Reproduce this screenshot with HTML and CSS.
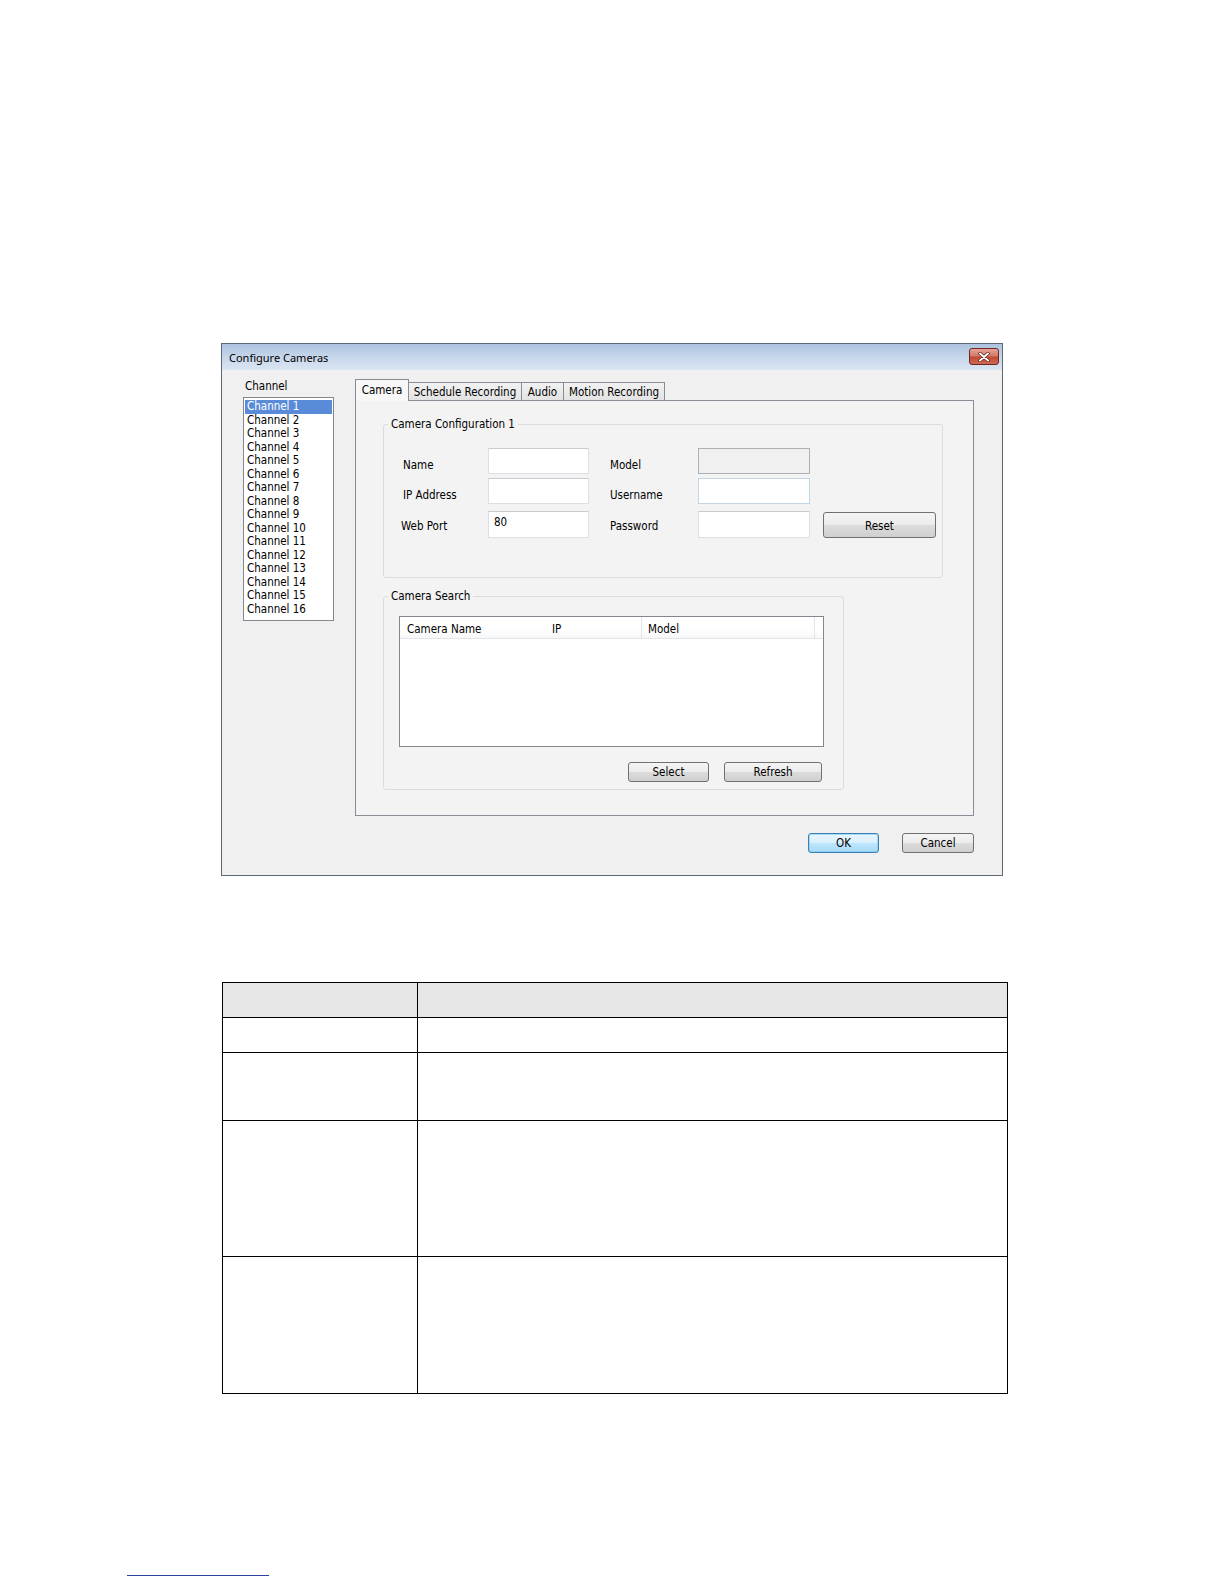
FILE: index.html
```html
<!DOCTYPE html>
<html>
<head>
<meta charset="utf-8">
<title>Configure Cameras</title>
<link rel="stylesheet" href="styles.css">
</head>
<body>
<div class="dialog">
  <div class="titlebar">
    <span class="title">Configure Cameras</span>
    <span class="close"><svg width="12" height="10" viewBox="0 0 12 10"><path d="M2 1.5 L10 8.5 M10 1.5 L2 8.5" stroke="#5a1a14" stroke-width="3.4" stroke-linecap="round"/><path d="M2 1.5 L10 8.5 M10 1.5 L2 8.5" stroke="#ffffff" stroke-width="2" stroke-linecap="round"/></svg></span>
  </div>
  <div class="dlg-body">
    <div class="chan-col">
      <div class="chan-label">Channel</div>
      <ul class="chan-list">
        <li class="sel">Channel 1</li>
        <li>Channel 2</li>
        <li>Channel 3</li>
        <li>Channel 4</li>
        <li>Channel 5</li>
        <li>Channel 6</li>
        <li>Channel 7</li>
        <li>Channel 8</li>
        <li>Channel 9</li>
        <li>Channel 10</li>
        <li>Channel 11</li>
        <li>Channel 12</li>
        <li>Channel 13</li>
        <li>Channel 14</li>
        <li>Channel 15</li>
        <li>Channel 16</li>
      </ul>
    </div>
    <div class="tabs-col">
      <div class="tabstrip">
        <div class="tab active t-cam">Camera</div>
        <div class="tab t-sched">Schedule Recording</div>
        <div class="tab t-audio">Audio</div>
        <div class="tab t-motion">Motion Recording</div>
      </div>
      <div class="tabpanel">
        <fieldset class="group g1">
          <legend>Camera Configuration 1</legend>
          <div class="cfg-row r1">
            <div class="lbl">Name</div>
            <div class="tb tb-l"></div>
            <div class="lbl lbl2">Model</div>
            <div class="tb tb-r tb-dis"></div>
          </div>
          <div class="cfg-row r2">
            <div class="lbl">IP Address</div>
            <div class="tb tb-l"></div>
            <div class="lbl lbl2">Username</div>
            <div class="tb tb-r tb-hot"></div>
          </div>
          <div class="cfg-row r3">
            <div class="lbl lbl-wp">Web Port</div>
            <div class="tb tb-l">80</div>
            <div class="lbl lbl2">Password</div>
            <div class="tb tb-r"></div>
            <button class="btn btn-reset">Reset</button>
          </div>
        </fieldset>
        <fieldset class="group g2">
          <legend>Camera Search</legend>
          <div class="listview">
            <div class="lv-head">
              <span class="col c1">Camera Name</span>
              <span class="col c2">IP</span>
              <span class="col c3">Model</span>
              <span class="col c4"></span>
            </div>
          </div>
          <div class="search-btns">
            <button class="btn btn-select">Select</button>
            <button class="btn btn-refresh">Refresh</button>
          </div>
        </fieldset>
      </div>
      <div class="dlg-btns">
        <button class="btn btn-ok">OK</button>
        <button class="btn btn-cancel">Cancel</button>
      </div>
    </div>
  </div>
</div>

<table class="desc">
  <tr class="hd"><td class="k"></td><td></td></tr>
  <tr class="h35"><td class="k"></td><td></td></tr>
  <tr class="h68"><td class="k"></td><td></td></tr>
  <tr class="h136"><td class="k"></td><td></td></tr>
  <tr class="h137"><td class="k"></td><td></td></tr>
</table>

<div class="footline"></div>
</body>
</html>
```
FILE: styles.css
```css
body {
  margin: 0;
  background: #ffffff;
  font-family: "DejaVu Sans Condensed", "DejaVu Sans", sans-serif;
  font-size: 11.5px;
  color: #000;
}

.dialog {
  margin: 343px 0 0 221px;
  width: 782px;
  height: 533px;
  box-sizing: border-box;
  border: 1px solid #5d6874;
  background: #f0f0f0;
}

.titlebar {
  height: 26px;
  box-sizing: border-box;
  padding: 4px 3px 0 7px;
  display: flex;
  justify-content: space-between;
  align-items: flex-start;
  background: linear-gradient(#adc3e0, #c9d8ec 55%, #dbe5f2);
}

.title {
  font-family: "Noto Sans", "Open Sans", sans-serif;
  font-size: 11px;
  line-height: 16px;
  margin-top: 2px;
  color: #000;
}

.close {
  width: 30px;
  height: 17px;
  box-sizing: border-box;
  border: 1px solid #6f2820;
  border-radius: 3px;
  background: linear-gradient(#e6a496 0%, #d47a69 45%, #c24a35 55%, #cf6a52 100%);
  display: flex;
  align-items: center;
  justify-content: center;
}

.dlg-body {
  display: flex;
  gap: 21px;
  padding: 9px 0 0 21px;
}

.chan-col { width: 91px; }

.chan-label {
  line-height: 13px;
  margin: 1px 0 0 2px;
}

.chan-list {
  list-style: none;
  margin: 4px 0 0;
  padding: 2px 1px 1px;
  height: 224px;
  box-sizing: border-box;
  border: 1px solid #828790;
  background: #fff;
}

.chan-list li {
  line-height: 13.5px;
  height: 13.5px;
  padding-left: 2px;
  white-space: nowrap;
}

.chan-list li.sel {
  background: #5a8bd8;
  color: #fff;
}

.tabs-col { width: 619px; }

.tabstrip {
  display: flex;
  align-items: flex-end;
  height: 21px;
}

.tab {
  box-sizing: border-box;
  height: 18px;
  border: 1px solid #898c95;
  border-bottom: none;
  background: linear-gradient(#f2f2f2, #e3e3e3);
  text-align: center;
  line-height: 18px;
  margin-left: -1px;
  white-space: nowrap;
}

.tab.active {
  position: relative;
  z-index: 2;
  height: 22px;
  margin-bottom: -1px;
  margin-left: 0;
  background: #f7f7f7;
  line-height: 20px;
}

.t-cam { width: 54px; }
.t-sched { width: 114px; }
.t-audio { width: 43px; }
.t-motion { width: 102px; }

.tabpanel {
  height: 416px;
  box-sizing: border-box;
  border: 1px solid #898c95;
  background: #f3f3f3;
  padding: 0 0 0 27px;
}

.group {
  box-sizing: border-box;
  border: 1px solid #d8dde2;
  border-radius: 3px;
  margin: 0;
  min-width: 0;
}

.group legend {
  padding: 0 3px;
  margin-left: 4px;
  line-height: 13px;
}

.g1 {
  margin-top: 17px;
  width: 560px;
  height: 160px;
  padding: 17px 0 0 0;
}

.cfg-row {
  display: flex;
  height: 26px;
}

.r2 { margin-top: 4px; }
.r3 { margin-top: 7px; height: 27px; }

.lbl {
  width: 104px;
  box-sizing: border-box;
  padding: 11px 0 0 19px;
  line-height: 13px;
  white-space: nowrap;
}

.r3 .lbl { padding-top: 9px; }
.lbl-wp { padding-left: 17px; }

.lbl2 {
  width: 109px;
  padding-left: 21px;
}

.tb {
  box-sizing: border-box;
  height: 100%;
  background: #fff;
  border: 1px solid #dcdfe3;
  border-top-color: #c9ccd1;
  padding: 4px 0 0 5px;
  line-height: 13px;
}

.tb-l { width: 101px; }
.tb-r { width: 112px; }

.tb-dis {
  background: #f0f0f0;
  border-color: #adb1b6;
}

.tb-hot {
  border-color: #c3d6e6;
}

.btn {
  box-sizing: border-box;
  font-family: "DejaVu Sans Condensed", "DejaVu Sans", sans-serif;
  font-size: 11.5px;
  color: #000;
  border: 1px solid #707070;
  border-radius: 3px;
  background: linear-gradient(#f4f4f4 0%, #ececec 48%, #dcdcdc 52%, #cfcfcf 100%);
  padding: 0;
  line-height: 16px;
}

.btn-reset {
  width: 113px;
  height: 26px;
  margin: 1px 0 0 13px;
  padding-top: 2px;
}

.g2 {
  margin-top: 12px;
  width: 461px;
  height: 200px;
  padding: 13px 0 0 0;
}

.listview {
  width: 425px;
  height: 131px;
  margin-left: 15px;
  box-sizing: border-box;
  border: 1px solid #828790;
  background: #fff;
}

.lv-head {
  display: flex;
  height: 21px;
  border-bottom: 1px solid #e3e5e8;
  background: linear-gradient(#ffffff, #ffffff 60%, #f6f7f8);
}

.col {
  box-sizing: border-box;
  line-height: 15px;
  padding-top: 5px;
  white-space: nowrap;
  border-right: 1px solid #e3e5e8;
}

.c1 { width: 145px; padding-left: 7px; border-right-color: transparent; }
.c2 { width: 97px; padding-left: 7px; }
.c3 { width: 173px; padding-left: 6px; }
.c4 { flex: 1; border-right: none; }

.search-btns {
  display: flex;
  justify-content: flex-end;
  gap: 15px;
  width: 438px;
  margin-top: 15px;
}

.btn-select { width: 81px; height: 20px; }
.btn-refresh { width: 98px; height: 20px; line-height: 14px; }

.dlg-btns {
  display: flex;
  justify-content: flex-end;
  gap: 23px;
  margin-top: 17px;
}

.btn-ok {
  width: 71px;
  height: 20px;
  border-color: #3c7fb1;
  background: linear-gradient(#eaf6fd 0%, #d9f0fc 48%, #bee6fd 52%, #a7d9f5 100%);
  box-shadow: inset 0 0 0 1px rgba(120, 200, 240, 0.6);
}

.btn-cancel {
  width: 72px;
  height: 20px;
}

.desc {
  margin: 106px 0 0 222px;
  width: 786px;
  border-collapse: collapse;
  border: 1px solid #000;
}

.desc td {
  border: 1px solid #000;
  padding: 0;
}

.desc td.k { width: 194px; }

.desc tr.hd td { background: #e6e6e6; height: 34px; }
.desc tr.h35 td { height: 34px; }
.desc tr.h68 td { height: 67px; }
.desc tr.h136 td { height: 135px; }
.desc tr.h137 td { height: 136px; }

.footline {
  margin: 181px 0 0 127px;
  width: 142px;
  height: 1px;
  background: #2d45a0;
}
```
